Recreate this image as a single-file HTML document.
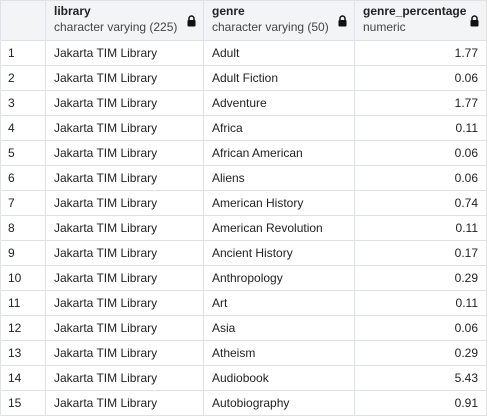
<!DOCTYPE html>
<html><head><style>
body{margin:0;width:487px;height:416px;overflow:hidden;background:#fff;font-family:"Liberation Sans",sans-serif;font-size:12px;color:#222;}
table{border-collapse:collapse;table-layout:fixed;position:absolute;left:0;top:0;}
td,th{border:1px solid #dee1e6;padding:0 8px;white-space:nowrap;overflow:hidden;}
th{height:39px;background:#f3f4f6;text-align:left;font-weight:normal;vertical-align:middle;position:relative;}
th b{display:block;font-weight:bold;color:#222;line-height:16px;margin-top:-3px;}
th span{display:block;color:#444;line-height:16px;}
td{height:24px;}
td.n{text-align:right;}
.lock{position:absolute;right:7px;top:14px;width:9px;height:12px;}
tr td:first-child{padding-left:7px;}
</style></head><body>
<table>
<colgroup><col style="width:45px"><col style="width:158px"><col style="width:151px"><col style="width:132px"></colgroup>
<tr><th style="border-top:1px solid #dee1e6"></th>
<th><b>library</b><span>character varying (225)</span><svg class="lock" viewBox="0 0 9 12"><path d="M2 5V3.5a2.5 2.5 0 0 1 5 0V5" fill="none" stroke="#111" stroke-width="1.5"/><rect x="0.5" y="5" width="8" height="6.5" rx="1" fill="#111"/></svg></th>
<th><b>genre</b><span>character varying (50)</span><svg class="lock" viewBox="0 0 9 12"><path d="M2 5V3.5a2.5 2.5 0 0 1 5 0V5" fill="none" stroke="#111" stroke-width="1.5"/><rect x="0.5" y="5" width="8" height="6.5" rx="1" fill="#111"/></svg></th>
<th><b>genre_percentage</b><span>numeric</span><svg class="lock" viewBox="0 0 9 12"><path d="M2 5V3.5a2.5 2.5 0 0 1 5 0V5" fill="none" stroke="#111" stroke-width="1.5"/><rect x="0.5" y="5" width="8" height="6.5" rx="1" fill="#111"/></svg></th></tr>
<tr><td>1</td><td>Jakarta TIM Library</td><td>Adult</td><td class="n">1.77</td></tr>
<tr><td>2</td><td>Jakarta TIM Library</td><td>Adult Fiction</td><td class="n">0.06</td></tr>
<tr><td>3</td><td>Jakarta TIM Library</td><td>Adventure</td><td class="n">1.77</td></tr>
<tr><td>4</td><td>Jakarta TIM Library</td><td>Africa</td><td class="n">0.11</td></tr>
<tr><td>5</td><td>Jakarta TIM Library</td><td>African American</td><td class="n">0.06</td></tr>
<tr><td>6</td><td>Jakarta TIM Library</td><td>Aliens</td><td class="n">0.06</td></tr>
<tr><td>7</td><td>Jakarta TIM Library</td><td>American History</td><td class="n">0.74</td></tr>
<tr><td>8</td><td>Jakarta TIM Library</td><td>American Revolution</td><td class="n">0.11</td></tr>
<tr><td>9</td><td>Jakarta TIM Library</td><td>Ancient History</td><td class="n">0.17</td></tr>
<tr><td>10</td><td>Jakarta TIM Library</td><td>Anthropology</td><td class="n">0.29</td></tr>
<tr><td>11</td><td>Jakarta TIM Library</td><td>Art</td><td class="n">0.11</td></tr>
<tr><td>12</td><td>Jakarta TIM Library</td><td>Asia</td><td class="n">0.06</td></tr>
<tr><td>13</td><td>Jakarta TIM Library</td><td>Atheism</td><td class="n">0.29</td></tr>
<tr><td>14</td><td>Jakarta TIM Library</td><td>Audiobook</td><td class="n">5.43</td></tr>
<tr><td>15</td><td>Jakarta TIM Library</td><td>Autobiography</td><td class="n">0.91</td></tr>
</table>
</body></html>
